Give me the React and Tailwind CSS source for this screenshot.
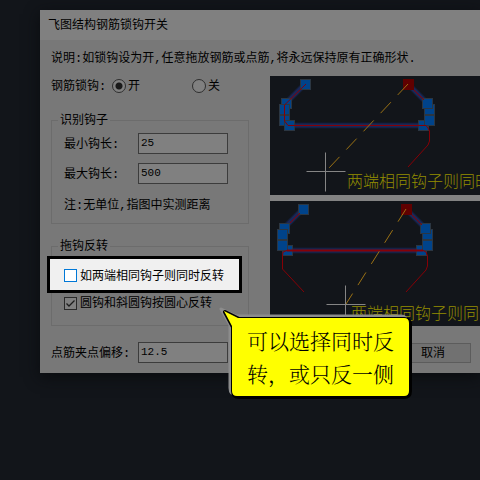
import { useState } from 'react';

const NODE_SIZE = 11;

const HookDrawing = ({ className, bar, thin, nodes, active, guide, cross, caption }) => {
    return (
        <svg className={className} aria-hidden="true">
            <polyline points={bar} fill="none" stroke="#142550" strokeWidth="6" strokeOpacity="0.5" />
            <polyline points={bar} fill="none" stroke="#1a2757" strokeWidth="4" />
            {nodes.map(([x, y]) => (
                <rect
                    key={`${x}-${y}`}
                    x={x - 5 + 0.5}
                    y={y - 5 + 0.5}
                    width={NODE_SIZE - 1}
                    height={NODE_SIZE - 1}
                    fill="#00438a"
                    stroke="#2b3642"
                />
            ))}
            {thin.map((line) => (
                <polyline key={line.points} points={line.points} fill="none" stroke="#860006" strokeWidth={line.width} />
            ))}
            <rect x={active[0] - 5} y={active[1] - 5} width={NODE_SIZE} height={NODE_SIZE} fill="#5f0000" />
            <line
                x1={guide[0]}
                y1={guide[1]}
                x2={guide[2]}
                y2={guide[3]}
                stroke="#9a7114"
                strokeDasharray="15 10"
            />
            <path
                d={`M${cross[0] - 19} ${cross[1]}h39M${cross[0]} ${cross[1] - 19}v39`}
                stroke="#858585"
                fill="none"
            />
            <text x={caption[0]} y={caption[1]} className="text-base" fill="#938d00">
                两端相同钩子则同时反转
            </text>
        </svg>
    );
};

const Field = ({ id, label, value, onChange, labelClass }) => {
    return (
        <div className="flex h-[21px] items-center">
            <label htmlFor={id} className={labelClass}>{label}</label>
            <input
                id={id}
                type="text"
                value={value}
                onChange={(e) => onChange(e.target.value)}
                className="h-[21px] w-[90px] border border-[#3c3c3c] bg-[#808080] px-0.5 pb-0.5 text-[11px] leading-4 outline-none"
            />
        </div>
    );
};

const LockOption = ({ label, checked, onChange }) => {
    return (
        <label className="flex w-20 shrink-0 items-center gap-0.5">
            <input
                type="radio"
                name="lock"
                checked={checked}
                onChange={onChange}
                className="size-[14px] appearance-none rounded-full border border-[#2e2e2e] bg-[#808080] checked:bg-[radial-gradient(circle,#1a1a1a_0_3px,#808080_4px)]"
            />
            <span className="pt-0.5 leading-[18px]">{label}</span>
        </label>
    );
};

const App = () => {
    const [locked, setLocked] = useState(true);
    const [minLength, setMinLength] = useState('25');
    const [maxLength, setMaxLength] = useState('500');
    const [offset, setOffset] = useState('12.5');
    const [flipBoth, setFlipBoth] = useState(false);
    const [flipCenter, setFlipCenter] = useState(true);

    return (
        <div className="min-h-screen overflow-hidden bg-[#12151a] pt-[10px] pl-10 font-['Liberation_Mono','Noto_Sans_CJK_SC',monospace] text-xs text-black">
            <main className="relative bg-[#787878] shadow-[0_4px_14px_#0a0c0f]">
                <h1 className="flex h-[30px] items-center bg-[#808080] px-2 pt-0.5 leading-5">飞图结构钢筋锁钩开关</h1>

                <div className="pt-2 pb-[10px] pl-[11px]">
                    <p className="pt-0.5 leading-[18px] whitespace-nowrap">
                        说明:如锁钩设为开,任意拖放钢筋或点筋,将永远保持原有正确形状.
                    </p>

                    <div className="mt-2 flex gap-[21px]">
                        <div className="w-[198px] shrink-0 leading-5">
                            <div className="flex h-5 items-center" role="radiogroup" aria-labelledby="lock-label">
                                <span id="lock-label" className="w-[61px] shrink-0 pt-0.5 leading-[18px]">钢筋锁钩:</span>
                                <LockOption label="开" checked={locked} onChange={() => setLocked(true)} />
                                <LockOption label="关" checked={!locked} onChange={() => setLocked(false)} />
                            </div>

                            <fieldset className="mt-[14px] border border-[#6c6c6c] px-3 pb-2">
                                <legend className="-ml-1.5 px-0.5 pt-0.5 leading-[18px]">识别钩子</legend>
                                <div className="flex flex-col gap-[9px] pt-[3px]">
                                    <Field id="min" label="最小钩长:" labelClass="w-[74px] pt-0.5 leading-[18px]" value={minLength} onChange={setMinLength} />
                                    <Field id="max" label="最大钩长:" labelClass="w-[74px] pt-0.5 leading-[18px]" value={maxLength} onChange={setMaxLength} />
                                    <p className="pt-1 leading-[18px] whitespace-nowrap">注:无单位,指图中实测距离</p>
                                </div>
                            </fieldset>

                            <fieldset className="mt-3 border border-[#6c6c6c] pb-3">
                                <legend className="ml-1.5 px-0.5 pt-0.5 leading-[18px]">拖钩反转</legend>
                                <label className="-ml-[5px] mr-1.5 flex h-[37px] items-center gap-[3px] border-[3px] border-black bg-[#f0f0f0] pt-0.5 pl-[14px] whitespace-nowrap">
                                    <input
                                        type="checkbox"
                                        checked={flipBoth}
                                        onChange={(e) => setFlipBoth(e.target.checked)}
                                        className="size-[13px] appearance-none border border-[#0078d7] bg-white checked:bg-[#0078d7]"
                                    />
                                    <span className="pt-0.5 leading-[18px]">如两端相同钩子则同时反转</span>
                                </label>
                                <label className="flex items-center gap-[3px] px-3 whitespace-nowrap">
                                    <span className="grid size-[13px] place-items-center">
                                        <input
                                            type="checkbox"
                                            checked={flipCenter}
                                            onChange={(e) => setFlipCenter(e.target.checked)}
                                            className="col-start-1 row-start-1 size-[13px] appearance-none border border-[#2a2a2a] bg-[#808080]"
                                        />
                                        {flipCenter && (
                                            <svg viewBox="0 0 13 13" className="pointer-events-none col-start-1 row-start-1 size-[13px]">
                                                <path d="M2.5 6.5L5 9L10.5 3.5" fill="none" stroke="#1c1c1c" strokeWidth="1.3" />
                                            </svg>
                                        )}
                                    </span>
                                    <span className="pt-0.5 leading-[18px]">圆钩和斜圆钩按圆心反转</span>
                                </label>
                            </fieldset>
                        </div>

                        <div className="flex min-w-0 flex-1 flex-col font-['Noto_Sans_CJK_SC',sans-serif] font-light">
                            <div className="flex flex-col gap-1.5 bg-[#828282]">
                                <HookDrawing
                                    className="block h-[119px] w-full bg-[#12151a]"
                                    bar="35,8 15,28 15,45 19,49.5 155,49.5 159,45 159,29 138,8"
                                    nodes={[[35, 8], [16, 27], [14, 33], [14, 44], [19, 49], [153, 49], [159, 33], [159, 44], [157, 27]]}
                                    thin={[
                                        { points: '36,8 14.5,29 14.5,45 18,49.5 156,49.5 158,52 159.5,55 159.5,65 158,69 138,91', width: 1 },
                                        { points: '138,8 154,24', width: 1 },
                                    ]}
                                    active={[138, 8]}
                                    guide={[138, 8, 59, 92]}
                                    cross={[55.5, 95.5]}
                                    caption={[77, 111]}
                                />
                                <HookDrawing
                                    className="block h-[125px] w-full bg-[#12151a]"
                                    bar="33,8 13,28 13,45 17,49.5 153,49.5 157,45 157,29 136,8"
                                    nodes={[[33, 8], [14, 27], [12, 33], [17, 49], [12, 44], [151, 49], [157, 33], [157, 44], [155, 27]]}
                                    thin={[
                                        { points: '30,12 20,22', width: 1 },
                                        { points: '17,49.5 153,49.5', width: 2 },
                                        { points: '17,49.5 13,51 12.5,55 12.5,68 34,91', width: 1 },
                                        { points: '153,49.5 156,51 157.5,55 157.5,65 156,69 136,91', width: 1 },
                                        { points: '136,8 152,24', width: 1 },
                                    ]}
                                    active={[136, 8]}
                                    guide={[136, 8, 76, 103]}
                                    cross={[75.5, 103.5]}
                                    caption={[81, 118]}
                                />
                            </div>
                        </div>
                    </div>

                    <div className="mt-4 flex items-center justify-between pr-[9px]">
                        <Field id="offset" label="点筋夹点偏移:" labelClass="w-[87px] pt-0.5 leading-[18px] whitespace-nowrap" value={offset} onChange={setOffset} />
                        <button type="button" className="h-5 w-[76px] border border-[#5c5c5c] bg-[#717171] pt-0.5 leading-4">
                            取消
                        </button>
                    </div>
                </div>

                <aside className="absolute top-[292px] left-[180px] h-[100px] w-[196px]">
                    <svg viewBox="0 0 196 100" className="absolute inset-0 size-full overflow-visible" aria-hidden="true">
                        <path
                            d="M3 8L18 15H183Q189 15 189 22V87Q189 94 183 94H19Q12 94 12 87V24Z"
                            fill="#8c8c8c"
                            stroke="#8c8c8c"
                            strokeWidth="3"
                            strokeLinejoin="round"
                            transform="translate(-2 -1)"
                            className="blur-[0.5px]"
                        />
                        <path
                            d="M4 9L18 16H183Q189 16 189 22V88Q189 94 183 94H18Q12 94 12 88V24Z"
                            fill="#000"
                            stroke="#000"
                            strokeWidth="4"
                            strokeLinejoin="round"
                            transform="translate(1 1)"
                            className="blur-[0.5px]"
                        />
                        <path
                            d="M4 9L18 16H184Q189 16 189 21V89Q189 94 184 94H17Q12 94 12 89V24Z"
                            fill="#ff0"
                        />
                    </svg>
                    <p className="relative pt-[22px] pl-[27px] font-['Noto_Serif_CJK_SC','Noto_Sans_CJK_SC',serif] text-[21px] leading-[33px] font-light whitespace-nowrap">
                        可以选择同时反
                        <br />
                        转，或只反一侧
                    </p>
                </aside>
            </main>
        </div>
    );
};

export default App;
